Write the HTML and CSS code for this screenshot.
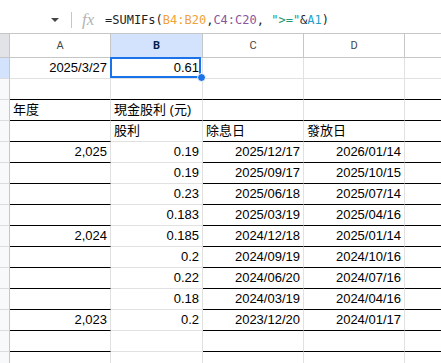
FILE: index.html
```html
<!DOCTYPE html>
<html lang="zh-Hant">
<head>
    <meta charset="UTF-8">
    <meta name="viewport" content="width=device-width, initial-scale=1.0">
    <title>股利試算表</title>
    <link rel="stylesheet" href="styles.css">
</head>
<body>
    <!-- Barra de fórmula -->
    <div class="formula-bar">
        <span class="caret"></span>
        <span class="sep"></span>
        <span class="fx">fx</span>
        <span class="formula">=SUMIFs(<span class="r1">B4:B20</span>,<span class="r2">C4:C20</span>, <span class="str">"&gt;="</span>&amp;<span class="r3">A1</span>)</span>
    </div>

    <!-- Hoja -->
    <div class="sheet">
        <div class="row hdr">
            <div class="cell corner"></div>
            <div class="cell">A</div>
            <div class="cell active">B</div>
            <div class="cell">C</div>
            <div class="cell">D</div>
            <div class="cell"></div>
        </div>

        <div class="row">
            <div class="cell rh active"></div>
            <div class="cell num">2025/3/27</div>
            <div class="cell num sel">0.61<span class="handle"></span></div>
            <div class="cell"></div>
            <div class="cell"></div>
            <div class="cell"></div>
        </div>
        <div class="row line">
            <div class="cell rh"></div>
            <div class="cell"></div>
            <div class="cell"></div>
            <div class="cell"></div>
            <div class="cell"></div>
            <div class="cell"></div>
        </div>
        <div class="row line">
            <div class="cell rh"></div>
            <div class="cell">年度</div>
            <div class="cell">現金股利 (元)</div>
            <div class="cell"></div>
            <div class="cell"></div>
            <div class="cell"></div>
        </div>
        <div class="row data">
            <div class="cell rh"></div>
            <div class="cell"></div>
            <div class="cell">股利</div>
            <div class="cell">除息日</div>
            <div class="cell">發放日</div>
            <div class="cell"></div>
        </div>
        <div class="row data">
            <div class="cell rh"></div>
            <div class="cell num">2,025</div>
            <div class="cell num">0.19</div>
            <div class="cell num">2025/12/17</div>
            <div class="cell num">2026/01/14</div>
            <div class="cell"></div>
        </div>
        <div class="row data">
            <div class="cell rh"></div>
            <div class="cell num"></div>
            <div class="cell num">0.19</div>
            <div class="cell num">2025/09/17</div>
            <div class="cell num">2025/10/15</div>
            <div class="cell"></div>
        </div>
        <div class="row data">
            <div class="cell rh"></div>
            <div class="cell num"></div>
            <div class="cell num">0.23</div>
            <div class="cell num">2025/06/18</div>
            <div class="cell num">2025/07/14</div>
            <div class="cell"></div>
        </div>
        <div class="row data">
            <div class="cell rh"></div>
            <div class="cell num"></div>
            <div class="cell num">0.183</div>
            <div class="cell num">2025/03/19</div>
            <div class="cell num">2025/04/16</div>
            <div class="cell"></div>
        </div>
        <div class="row data">
            <div class="cell rh"></div>
            <div class="cell num">2,024</div>
            <div class="cell num">0.185</div>
            <div class="cell num">2024/12/18</div>
            <div class="cell num">2025/01/14</div>
            <div class="cell"></div>
        </div>
        <div class="row data">
            <div class="cell rh"></div>
            <div class="cell num"></div>
            <div class="cell num">0.2</div>
            <div class="cell num">2024/09/19</div>
            <div class="cell num">2024/10/16</div>
            <div class="cell"></div>
        </div>
        <div class="row data">
            <div class="cell rh"></div>
            <div class="cell num"></div>
            <div class="cell num">0.22</div>
            <div class="cell num">2024/06/20</div>
            <div class="cell num">2024/07/16</div>
            <div class="cell"></div>
        </div>
        <div class="row data">
            <div class="cell rh"></div>
            <div class="cell num"></div>
            <div class="cell num">0.18</div>
            <div class="cell num">2024/03/19</div>
            <div class="cell num">2024/04/16</div>
            <div class="cell"></div>
        </div>
        <div class="row data">
            <div class="cell rh"></div>
            <div class="cell num">2,023</div>
            <div class="cell num">0.2</div>
            <div class="cell num">2023/12/20</div>
            <div class="cell num">2024/01/17</div>
            <div class="cell"></div>
        </div>
        <div class="row data">
            <div class="cell rh"></div>
            <div class="cell"></div>
            <div class="cell"></div>
            <div class="cell"></div>
            <div class="cell"></div>
            <div class="cell"></div>
        </div>
        <div class="row">
            <div class="cell rh"></div>
            <div class="cell"></div>
            <div class="cell"></div>
            <div class="cell"></div>
            <div class="cell"></div>
            <div class="cell"></div>
        </div>
    </div>
</body>
</html>
```

FILE: styles.css
```css
html, body {
    margin: 0;
    height: 363px;
    overflow: hidden;
    background: #fff;
}
body {
    font-family: "Liberation Sans", Arial, "Noto Sans CJK TC", sans-serif;
    color: #000;
}

/* barra de fórmula */
.formula-bar {
    height: 27px;
    padding-top: 6px;
    border-bottom: 1px solid #c4c7c5;
    display: flex;
    align-items: center;
}
.caret {
    width: 0;
    height: 0;
    margin-left: 51px;
    border-left: 4px solid transparent;
    border-right: 4px solid transparent;
    border-top: 4px solid #444746;
}
.sep {
    width: 1px;
    height: 16px;
    margin-left: 12px;
    background: #c4c7c5;
}
.fx {
    width: 16px;
    margin-left: 10px;
    margin-right: 7px;
    font-family: "Liberation Serif", serif;
    font-style: italic;
    font-size: 17px;
    color: #b4b4b4;
}
.formula {
    font-family: "DejaVu Sans Mono", monospace;
    font-size: 12px;
    color: #1f1f1f;
    white-space: pre;
}
.r1 { color: #efa33b; }
.r2 { color: #8a559c; }
.str { color: #1e9870; }
.r3 { color: #1ea2cc; }

/* hoja */
.row {
    display: grid;
    grid-template-columns: 10px 101px 92px 101px 101px 1fr;
    height: 21px;
}
.cell {
    box-sizing: border-box;
    border-right: 1px solid #e1e1e1;
    border-bottom: 1px solid #e1e1e1;
    padding: 0 3px;
    font-size: 13px;
    line-height: 20px;
    white-space: nowrap;
    overflow: hidden;
}
.cell:last-child {
    border-right: none;
}
.num {
    text-align: right;
}
.line > .cell:not(.rh),
.data > .cell:nth-child(2),
.data > .cell:nth-child(n+4) {
    border-bottom-color: #000;
}

.hdr {
    height: 24px;
}
.hdr .cell {
    border-color: #c4c7c5;
    font-family: Roboto, "Liberation Sans", sans-serif;
    font-size: 11px;
    line-height: 23px;
    text-align: center;
    color: #444746;
}
.hdr .cell.active {
    background: #d3e3fd;
    color: #041e49;
    font-weight: bold;
}
.corner {
    background: #e1e3e6;
}
.rh {
    padding: 0;
    background: #f8f9fa;
    border-right-color: #c4c7c5;
    border-bottom-color: #dadce0;
}
.rh.active {
    background: #d3e3fd;
}

/* celda seleccionada */
.sel {
    position: relative;
    overflow: visible;
}
.sel::after {
    content: "";
    position: absolute;
    top: -1px;
    left: -1px;
    right: 1px;
    bottom: 0;
    border: 2px solid #1a73e8;
}
.handle {
    position: absolute;
    right: -4px;
    bottom: -4px;
    width: 7px;
    height: 7px;
    border: 1px solid #fff;
    border-radius: 50%;
    background: #1a73e8;
    z-index: 2;
}
```
